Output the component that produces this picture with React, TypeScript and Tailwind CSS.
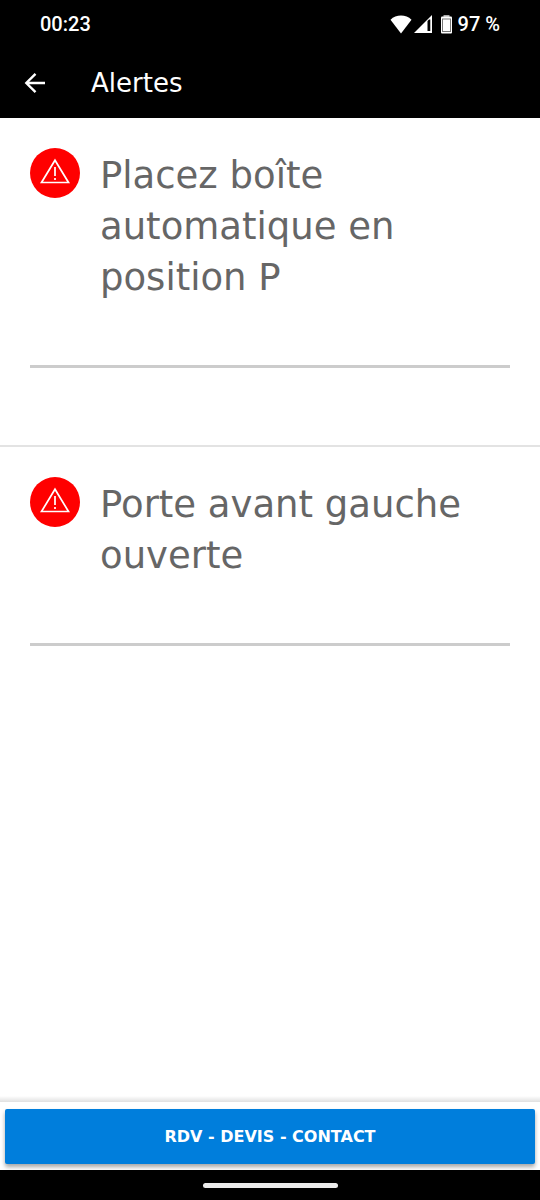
const alerts = [
  { id: 1, label: 'Placez boîte automatique en position P' },
  { id: 2, label: 'Porte avant gauche ouverte' },
];

function StatusBar() {
  return (
    <div className="flex h-12 items-center justify-between px-10 font-['Roboto',sans-serif] text-xl font-medium">
      <span>00:23</span>
      <div className="flex items-center">
        <svg viewBox="0 0 22 19" className="h-[19px] w-[22px]" fill="currentColor" aria-hidden="true">
          <path d="M11 18.5 0.5 4.8C3.4 2 7 0.6 11 0.6s7.6 1.4 10.5 4.2z" />
        </svg>
        <svg viewBox="0 0 18 18" className="ml-0.5 h-[18px] w-[18px]" fill="currentColor" aria-hidden="true">
          <path fillRule="evenodd" d="M18 0v18H0zM13.5 6v10h2.8V4.5H15z" />
        </svg>
        <svg viewBox="0 0 11 19" className="ml-[9px] h-[19px] w-[11px]" aria-hidden="true">
          <path d="M2.5 0h6v2h-6z" fill="#aaa" />
          <rect x="0" y="1.5" width="11" height="17" rx="1" fill="#fff" />
          <rect x="1.5" y="4" width="8" height="12.5" fill="none" stroke="#777" />
        </svg>
        <span className="ml-1.5">97 %</span>
      </div>
    </div>
  );
}

function AlertIcon() {
  return (
    <div className="flex size-[50px] shrink-0 items-center justify-center rounded-full bg-[#ff0000]">
      <svg viewBox="0 0 50 50" className="size-full" fill="none" stroke="#fff" strokeWidth="1.7" aria-hidden="true">
        <path d="M25 12.2 38.5 34.5h-27z" />
        <path d="M25 19v9M25 30v2" />
      </svg>
    </div>
  );
}

export default function App() {
  return (
    <div className="flex min-h-screen flex-col bg-white font-['DejaVu_Sans',sans-serif]">
      <header className="bg-black text-white">
        <StatusBar />
        <div className="flex h-[70px] items-center px-6">
          <button type="button" aria-label="Retour" className="flex size-[22px] items-center justify-center">
            <svg viewBox="0 0 22 22" className="size-full" fill="none" stroke="currentColor" strokeWidth="2.4" aria-hidden="true">
              <path d="M21 11H2.5M11.5 1.8 2.3 11l9.2 9.2" />
            </svg>
          </button>
          <h1 className="ml-[45px] text-[26px]">Alertes</h1>
        </div>
      </header>

      <main className="flex-1">
        <ul className="divide-y-2 divide-[#e3e3e3]">
          {alerts.map((alert) => (
            <li key={alert.id} className="px-[30px] pt-[30px] pb-[77px]">
              <div className="flex gap-5 border-b-3 border-[#cccccc] pb-[62px]">
                <AlertIcon />
                <p className="pt-0.5 text-[37px] leading-[51px] text-[#666666]">{alert.label}</p>
              </div>
            </li>
          ))}
        </ul>
      </main>

      {/* Bottom action */}
      <footer>
        <div className="h-1.5 bg-linear-to-b from-white to-[#e0e0e0]" />
        <div className="px-[5px] pt-[7px] pb-1.5">
          <button
            type="button"
            className="h-[55px] w-full rounded-xs bg-[#007edc] text-base font-bold text-white shadow-[0_3px_4px_rgba(0,0,0,0.35)]"
          >
            RDV - DEVIS - CONTACT
          </button>
        </div>
        <div className="relative flex h-[30px] items-center justify-center bg-black">
          <div className="h-[5px] w-[135px] rounded-full bg-[#ebebeb]" />
        </div>
      </footer>
    </div>
  );
}
